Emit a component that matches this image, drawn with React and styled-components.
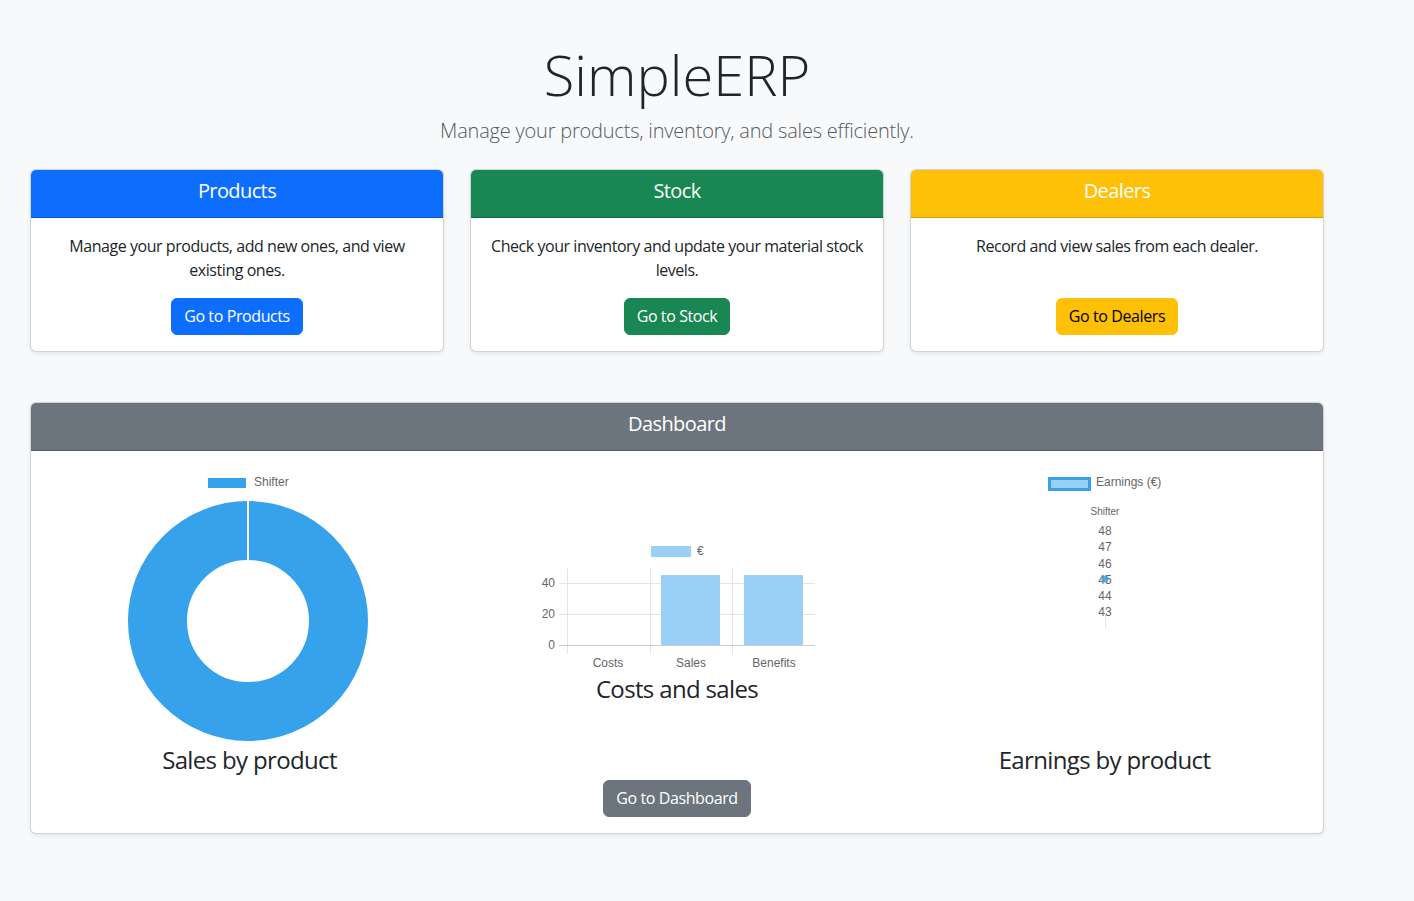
import React from 'react';
import styled, { createGlobalStyle } from 'styled-components';

const GlobalStyle = createGlobalStyle`
  body {
    margin: 0;
    background-color: #f8f9fa;
    font-family: "Open Sans", "Noto Sans", sans-serif;
    color: #212529;
  }
`;

const Page = styled.div`
  width: 1294px;
  padding: 41px 0 68px 30px;
`;

const Title = styled.h1`
  margin: 0;
  text-align: center;
  font-size: 56px;
  font-weight: 300;
  line-height: 67px;
`;

const Lead = styled.p`
  margin: 8px 0 23px;
  text-align: center;
  font-size: 20px;
  font-weight: 300;
  line-height: 30px;
  letter-spacing: -0.2px;
  color: #555b61;
`;

const CardRow = styled.div`
  display: grid;
  grid-template-columns: repeat(3, 1fr);
  gap: 26px;
`;

const Card = styled.div`
  display: flex;
  flex-direction: column;
  background-color: #ffffff;
  border: 1px solid rgba(0, 0, 0, 0.175);
  border-radius: 6px;
  box-shadow: 0 2px 4px rgba(0, 0, 0, 0.075);
  overflow: hidden;
  margin-top: ${(p) => p.$top || 0}px;
`;

const CardHeader = styled.div`
  background-color: ${(p) => p.$bg};
  color: #ffffff;
  text-align: center;
  font-size: 20px;
  line-height: 30px;
  letter-spacing: -0.6px;
  padding: 6px 16px 11px;
  border-bottom: 1px solid rgba(0, 0, 0, 0.175);
`;

const CardBody = styled.div`
  flex: 1;
  display: flex;
  flex-direction: column;
  align-items: center;
  padding: 16px;
  text-align: center;
`;

const CardText = styled.p`
  margin: 0 0 16px;
  font-size: 16px;
  line-height: 24px;
  letter-spacing: -0.45px;
  flex: 1;
`;

const Button = styled.a`
  display: inline-block;
  padding: 6px 12px;
  font-size: 16px;
  line-height: 23px;
  letter-spacing: -0.4px;
  border: 1px solid ${(p) => p.$bg};
  border-radius: 6px;
  text-decoration: none;
  background-color: ${(p) => p.$bg};
  color: ${(p) => p.$color || '#ffffff'};
  cursor: pointer;
`;

const DashBody = styled.div`
  display: flex;
  flex-direction: column;
  align-items: center;
  padding: 16px 4px;
`;

const ChartGrid = styled.div`
  align-self: stretch;
  display: grid;
  grid-template-columns: repeat(3, 1fr);
  align-items: center;
`;

const ChartCol = styled.div`
  display: flex;
  flex-direction: column;
  align-items: center;
`;

const ChartTitle = styled.h4`
  margin: 0;
  font-size: 24px;
  font-weight: 400;
  line-height: 29px;
  letter-spacing: -0.65px;
`;

const DashButtonWrap = styled.div`
  margin-top: 6px;
`;

const axisText = { fontFamily: '"Liberation Sans", Arial, sans-serif', fill: '#666666' };

const Doughnut = () => (
  <svg width="429" height="278" viewBox="0 0 429 278">
    <rect x="173" y="11" width="38" height="10" fill="#36a2eb" />
    <text x="219" y="19" fontSize="12" style={axisText}>Shifter</text>
    <circle cx="213" cy="154" r="90.5" fill="none" stroke="#36a2eb" strokeWidth="59" />
    <line x1="213" y1="33" x2="213" y2="94" stroke="#ffffff" strokeWidth="2" />
  </svg>
);

const BarChart = () => (
  <svg width="300" height="135" viewBox="0 0 300 135">
    <rect x="124" y="7" width="40" height="11" fill="#9ad0f5" />
    <text x="170" y="16" fontSize="12" style={axisText}>€</text>
    <g stroke="#e5e5e5" strokeWidth="1">
      <line x1="32" y1="44.5" x2="288" y2="44.5" />
      <line x1="32" y1="75.5" x2="288" y2="75.5" />
      <line x1="40.5" y1="29" x2="40.5" y2="115" />
      <line x1="123.5" y1="29" x2="123.5" y2="115" />
      <line x1="205.5" y1="29" x2="205.5" y2="115" />
    </g>
    <rect x="134" y="36" width="59" height="70" fill="#9ad0f5" />
    <rect x="217" y="36" width="59" height="70" fill="#9ad0f5" />
    <line x1="32" y1="106.5" x2="288" y2="106.5" stroke="#cccccc" strokeWidth="1" />
    <g fontSize="12" style={axisText} textAnchor="end">
      <text x="28" y="48">40</text>
      <text x="28" y="79">20</text>
      <text x="28" y="110">0</text>
    </g>
    <g fontSize="12" style={axisText} textAnchor="middle">
      <text x="81" y="128">Costs</text>
      <text x="164" y="128">Sales</text>
      <text x="247" y="128">Benefits</text>
    </g>
  </svg>
);

const RadarChart = () => (
  <svg width="429" height="278" viewBox="0 0 429 278">
    <rect x="159.5" y="11.5" width="40" height="11" fill="#9ad0f5" stroke="#36a2eb" strokeWidth="3" />
    <text x="206" y="19" fontSize="12" style={axisText}>Earnings (€)</text>
    <text x="215" y="48" fontSize="10" textAnchor="middle" style={axisText}>Shifter</text>
    <line x1="215.5" y1="148" x2="215.5" y2="161" stroke="#e5e5e5" strokeWidth="1" />
    <g fontSize="12" style={axisText} textAnchor="middle">
      <text x="215" y="68">48</text>
      <text x="215" y="84">47</text>
      <text x="215" y="100.5">46</text>
      <text x="215" y="116.5">45</text>
      <text x="215" y="132.5">44</text>
      <text x="215" y="149">43</text>
    </g>
    <circle cx="215" cy="112" r="3.5" fill="#36a2eb" opacity="0.85" />
  </svg>
);

const modules = [
  {
    name: 'Products',
    bg: '#0d6efd',
    text: 'Manage your products, add new ones, and view existing ones.',
    button: 'Go to Products',
  },
  {
    name: 'Stock',
    bg: '#198754',
    text: 'Check your inventory and update your material stock levels.',
    button: 'Go to Stock',
  },
  {
    name: 'Dealers',
    bg: '#ffc107',
    color: '#000000',
    text: 'Record and view sales from each dealer.',
    button: 'Go to Dealers',
  },
];

const App = () => (
  <Page>
    <GlobalStyle />
    <Title>SimpleERP</Title>
    <Lead>Manage your products, inventory, and sales efficiently.</Lead>
    <CardRow>
      {modules.map((m) => (
        <Card key={m.name}>
          <CardHeader $bg={m.bg}>{m.name}</CardHeader>
          <CardBody>
            <CardText>{m.text}</CardText>
            <Button $bg={m.bg} $color={m.color}>{m.button}</Button>
          </CardBody>
        </Card>
      ))}
    </CardRow>
    <Card $top={50}>
      <CardHeader $bg="#6c757d">Dashboard</CardHeader>
      <DashBody>
        <ChartGrid>
          <ChartCol>
            <Doughnut />
            <ChartTitle>Sales by product</ChartTitle>
          </ChartCol>
          <ChartCol>
            <BarChart />
            <ChartTitle>Costs and sales</ChartTitle>
          </ChartCol>
          <ChartCol>
            <RadarChart />
            <ChartTitle>Earnings by product</ChartTitle>
          </ChartCol>
        </ChartGrid>
        <DashButtonWrap>
          <Button $bg="#6c757d">Go to Dashboard</Button>
        </DashButtonWrap>
      </DashBody>
    </Card>
  </Page>
);

export default App;
